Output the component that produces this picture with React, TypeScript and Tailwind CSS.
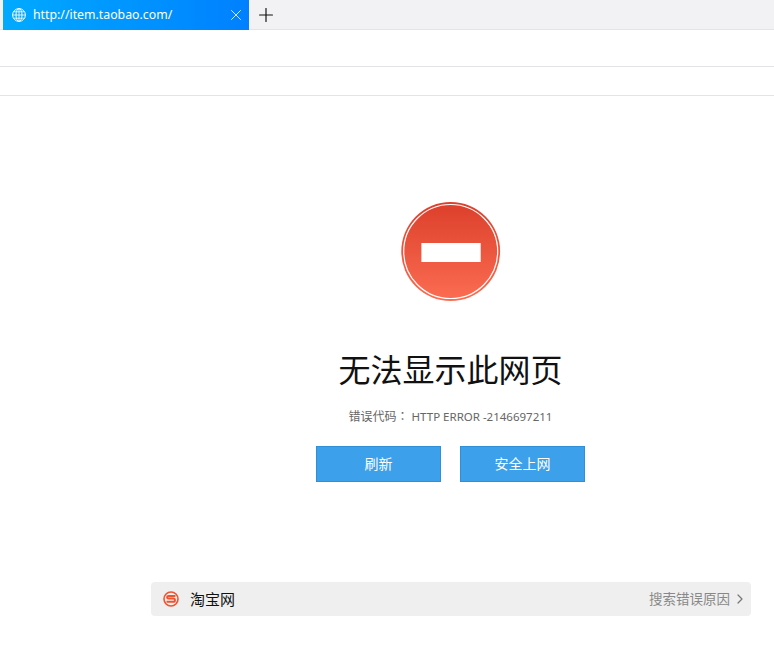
import { X, Plus, ChevronRight } from 'lucide-react';

const GlobeIcon = () => (
  <svg width="14" height="14" viewBox="0 0 14 14" fill="none" stroke="currentColor" strokeWidth="1">
    <circle cx="7" cy="7" r="6.4" />
    <ellipse cx="7" cy="7" rx="3" ry="6.4" />
    <path d="M7 .6V13.4M.6 7H13.4M1.6 3.8H12.4M1.6 10.2H12.4" strokeWidth=".8" />
  </svg>
);

const StopIcon = () => (
  <svg width="100" height="100" viewBox="0 0 100 100">
    <defs>
      <linearGradient id="stop" x1="0" y1="0" x2="0" y2="1">
        <stop offset="0" stopColor="#dc3f2b" />
        <stop offset="1" stopColor="#fb6d52" />
      </linearGradient>
    </defs>
    <circle cx="49.7" cy="49.5" r="49.4" fill="url(#stop)" />
    <circle cx="49.7" cy="49.5" r="47" fill="none" stroke="#ffffff" strokeWidth="1.2" />
    <rect x="20.4" y="41" width="59.3" height="19" fill="#ffffff" />
  </svg>
);

const SogouLogo = () => (
  <svg width="16" height="16" viewBox="0 0 16 16">
    <circle cx="8" cy="8" r="7" fill="none" stroke="#f0532d" strokeWidth="1.6" />
    <path d="M12.4 5H5.6C3.6 5 3.6 7.6 5.6 7.6H10.4C12.4 7.6 12.4 10.8 10.4 10.8H3.6" fill="none" stroke="#f0532d" strokeWidth="2" />
  </svg>
);

export default function App() {
  return (
    <div className="h-[661px] w-[774px] overflow-hidden bg-white font-['Noto_Sans','Noto_Sans_CJK_SC',sans-serif]">
      <div className="flex h-[30px] items-stretch border-b border-[#e4e4e6] bg-[#f2f2f4] pl-[3px]">
        <div className="flex h-[30px] w-[246px] items-center bg-gradient-to-r from-[#00aaff] to-[#0080ff] pl-[9px] pr-[4px] text-white">
          <GlobeIcon />
          <span className="ml-[7px] flex-1 text-[12.3px]">http://item.taobao.com/</span>
          <X size={18} strokeWidth={1.2} className="opacity-90" />
        </div>
        <div className="ml-[6px] flex items-center">
          <Plus size={22} strokeWidth={1.3} className="text-[#111111]" />
        </div>
      </div>
      <div className="h-[37px] border-b border-[#e4e4e6]" />
      <div className="h-[29px] border-b border-[#e4e4e6]" />

      <div className="ml-[151px] w-[600px] pt-[106px]">
        <div className="flex w-[599px] flex-col items-center">
          <StopIcon />
          <h1 className="mt-[46px] text-[32px] leading-[44px] font-normal text-[#111111]">无法显示此网页</h1>
          <p className="mt-[16px] text-xs leading-[16px] text-[#666666]">
            错误代码<span className="font-['Noto_Sans_CJK_TC',sans-serif]">：</span>
            <span className="text-[11.5px]"> HTTP ERROR -2146697211</span>
          </p>
          <div className="mt-[21px] flex gap-[19px]">
            <button className="h-9 w-[125px] border border-[#2f8fd8] bg-[#3ca0eb] text-sm text-white">刷新</button>
            <button className="h-9 w-[125px] border border-[#2f8fd8] bg-[#3ca0eb] text-sm text-white">安全上网</button>
          </div>
        </div>
        <div className="mt-[100px] flex h-[34px] w-full items-center rounded-[4px] bg-[#efefef] pl-3 pr-[3px]">
          <SogouLogo />
          <span className="ml-[11px] flex-1 text-[15px] text-[#111111]">淘宝网</span>
          <span className="text-[13.5px] text-[#888888]">搜索错误原因</span>
          <ChevronRight size={16} strokeWidth={1.8} className="ml-[2px] text-[#777777]" />
        </div>
      </div>
    </div>
  );
}
